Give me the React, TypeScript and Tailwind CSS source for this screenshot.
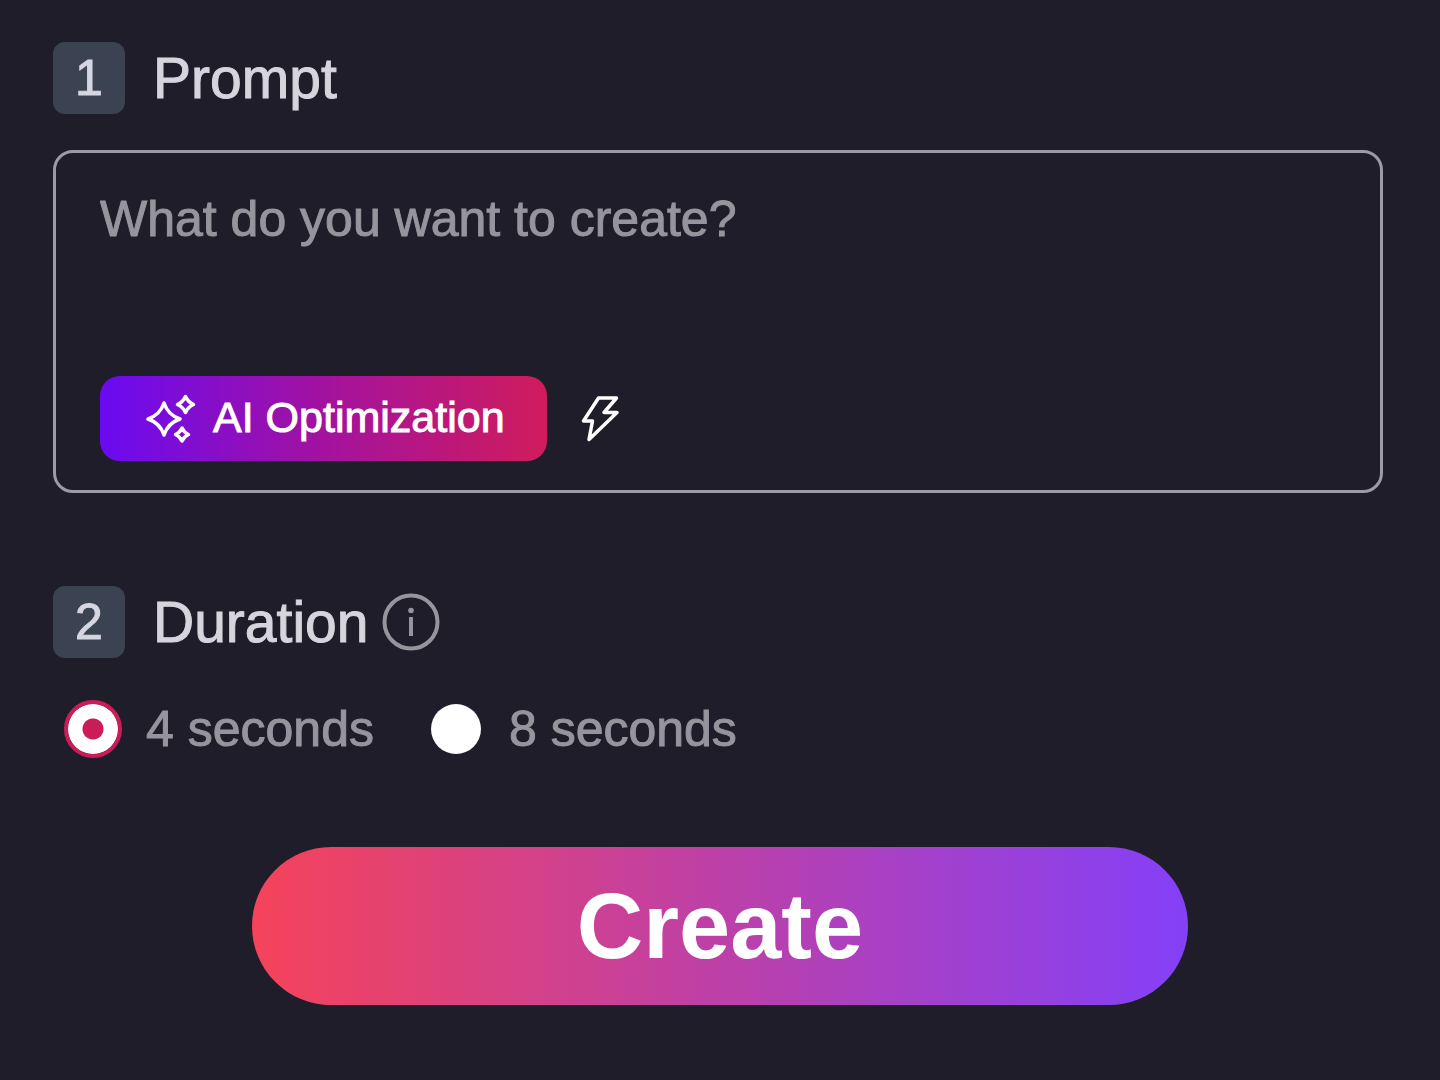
import React, { useState } from 'react';

interface StepHeaderProps {
    step: number;
    children: React.ReactNode;
}

function StepHeader({ step, children }: StepHeaderProps) {
    return (
        <div className="flex items-center">
            <span className="flex size-[72px] shrink-0 items-center justify-center rounded-xl bg-[#3b4252] text-[50px] leading-none text-[#d6d5e2] [-webkit-text-stroke:1px_currentColor]">
                {step}
            </span>
            <div className="ml-7 flex items-center gap-[14px] text-[57px] leading-[72px] text-[#d6d4dd] [-webkit-text-stroke:1px_currentColor]">
                {children}
            </div>
        </div>
    );
}

function SparklesIcon() {
    return (
        <svg className="size-[50px]" viewBox="0 0 50 50" fill="none" stroke="currentColor" strokeWidth="3.5" strokeLinejoin="round" aria-hidden="true">
            <path d="M18 9 Q22 21 34 25 Q22 29 18 41 Q14 29 2 25 Q14 21 18 9 Z" />
            <path d="M39.5 2.5 Q42 8 47.5 10.5 Q42 13 39.5 18.5 Q37 13 31.5 10.5 Q37 8 39.5 2.5 Z" />
            <path d="M36 34 Q38 38.5 42.5 40.5 Q38 42.5 36 47 Q34 42.5 29.5 40.5 Q34 38.5 36 34 Z" />
        </svg>
    );
}

function BoltIcon() {
    return (
        <svg className="h-[50px] w-10" viewBox="0 0 40 50" fill="none" stroke="currentColor" strokeWidth="3.5" strokeLinejoin="round" aria-hidden="true">
            <path d="M19.5 4 H37.5 L25 18.5 H38 L10 45.5 L13.5 27 H4.5 Z" />
        </svg>
    );
}

function InfoIcon() {
    return (
        <svg className="size-[58px]" viewBox="0 0 58 58" fill="none" stroke="currentColor" aria-hidden="true">
            <circle cx="29" cy="29" r="26.5" strokeWidth="4" />
            <circle cx="29" cy="17.5" r="2.8" fill="currentColor" stroke="none" />
            <path d="M29 24 V43" strokeWidth="4" />
        </svg>
    );
}

const durations = ['4', '8'];

export default function App() {
    const [prompt, setPrompt] = useState('');
    const [duration, setDuration] = useState('4');

    return (
        <main className="min-h-screen bg-[#1f1d2a] px-[53px] pt-[42px] pb-[75px] font-['Liberation_Sans',Arial,sans-serif]">
            <form onSubmit={(e) => e.preventDefault()}>
                <section>
                    <StepHeader step={1}>
                        <label htmlFor="prompt">Prompt</label>
                    </StepHeader>
                    <div className="mt-9 mr-1 rounded-[20px] border-3 border-[#9c9aa5] px-11 pt-9 pb-[29px]">
                        <textarea
                            id="prompt"
                            rows={3}
                            className="block h-[187px] w-full resize-none bg-transparent text-[50px] leading-[60px] text-[#d6d4dd] outline-none placeholder:text-[#96949c] placeholder:opacity-100 [-webkit-text-stroke:1px_currentColor]"
                            placeholder="What do you want to create?"
                            value={prompt}
                            onChange={(e) => setPrompt(e.target.value)}
                        />
                        <div className="flex items-center gap-8">
                            <button
                                type="button"
                                className="flex h-[85px] items-center gap-[17px] rounded-[20px] bg-linear-to-r/srgb from-[#6a0af2] via-[#a3129f] to-[#d01c5c] pr-[42px] pl-[46px] text-[43px] leading-none text-white [-webkit-text-stroke:1px_currentColor]"
                            >
                                <SparklesIcon />
                                <span className="pb-0.5">AI Optimization</span>
                            </button>
                            <button type="button" aria-label="Quick prompt" className="text-white">
                                <BoltIcon />
                            </button>
                        </div>
                    </div>
                </section>

                <section className="mt-[93px]">
                    <StepHeader step={2}>
                        <span id="duration-label">Duration</span>
                        <button type="button" aria-label="About duration" className="text-[#96949c]">
                            <InfoIcon />
                        </button>
                    </StepHeader>
                    <div role="radiogroup" aria-labelledby="duration-label" className="mt-[42px] ml-[11px] flex items-center gap-[53px]">
                        {durations.map((value) => (
                            <label key={value} className="flex items-center gap-6 text-[50px] leading-[58px] text-[#96949c] [-webkit-text-stroke:1px_currentColor]">
                                <input
                                    type="radio"
                                    name="duration"
                                    value={value}
                                    checked={duration === value}
                                    onChange={() => setDuration(value)}
                                    className="size-[58px] shrink-0 appearance-none rounded-full border-4 border-transparent bg-white bg-clip-padding checked:border-[#cb1c57] checked:bg-[radial-gradient(circle,#cb1c57_10px,#ffffff_11px)]"
                                />
                                {value} seconds
                            </label>
                        ))}
                    </div>
                </section>

                <button
                    type="submit"
                    className="mx-auto mt-[89px] block h-[158px] w-full max-w-[936px] rounded-full bg-linear-to-r/srgb from-[#f5435a] via-[#bd40a8] to-[#8440f8] text-[92px] leading-none font-bold text-white"
                >
                    Create
                </button>
            </form>
        </main>
    );
}
